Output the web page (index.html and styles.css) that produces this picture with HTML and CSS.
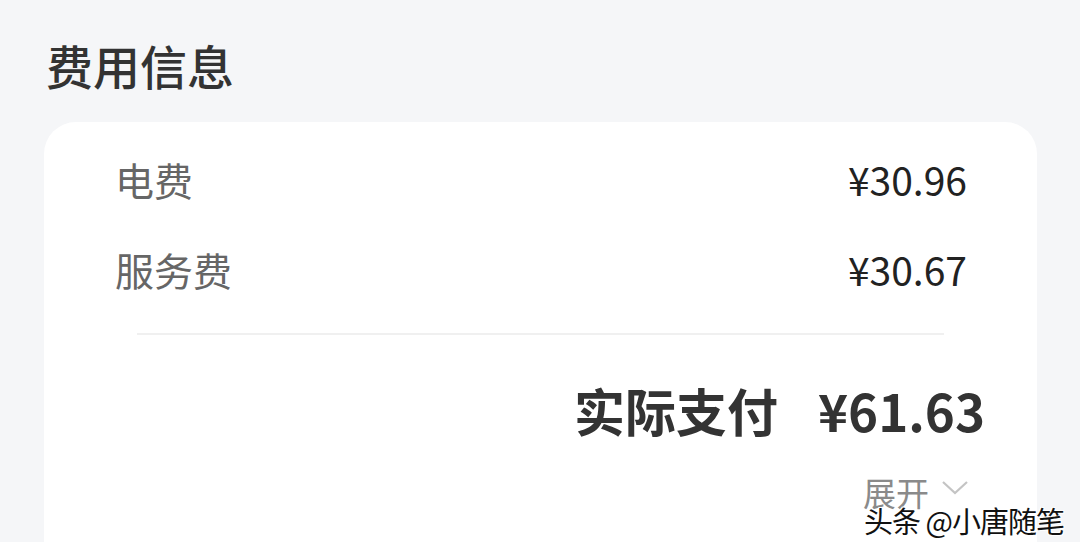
FILE: index.html
```html
<!DOCTYPE html>
<html lang="zh-CN">
  <head>
    <meta charset="UTF-8" />
    <meta name="viewport" content="width=device-width, initial-scale=1.0" />
    <title>费用信息</title>
    <link rel="stylesheet" href="styles.css">
  </head>

  <body>
    <h1 class="title">费用信息</h1>
    <div class="card">
      <div class="row">
        <span class="label">电费</span>
        <span class="amount">¥30.96</span>
      </div>
      <div class="row">
        <span class="label">服务费</span>
        <span class="amount">¥30.67</span>
      </div>
      <hr class="divider">
      <div class="total">
        <span>实际支付</span>
        <span class="total-amount">¥61.63</span>
      </div>
      <div class="expand">
        <span>展开</span>
        <svg width="28" height="16" viewBox="0 0 28 16">
          <path d="M2 2 L14 13 L26 2" fill="none" stroke="#c4c4c4" stroke-width="2.2" />
        </svg>
      </div>
    </div>
    <div class="watermark">头条 @小唐随笔</div>
  </body>
</html>
```

FILE: styles.css
```css
body {
  font-family: "Noto Sans CJK SC", "Noto Sans", sans-serif;
  margin: 0;
  padding: 41px 0 0 0;
  height: 542px;
  box-sizing: border-box;
  overflow: hidden;
  background-color: #f5f6f8;
  position: relative;
}

.title {
  margin: 0 0 0 46px;
  font-size: 47px;
  line-height: 48px;
  font-weight: 500;
  color: #333;
}

.card {
  margin: 33px 0 0 44px;
  width: 993px;
  height: 420px;
  box-sizing: border-box;
  padding: 37px 52px 0 71px;
  background-color: #fff;
  border-radius: 32px 32px 0 0;
}

.row {
  display: flex;
  justify-content: space-between;
  align-items: center;
  height: 40px;
  font-size: 39px;
  line-height: 40px;
  padding-right: 18px;
}

.row + .row {
  margin-top: 50px;
}

.label {
  color: #666;
}

.amount {
  color: #222;
}

.divider {
  margin: 44px 0 0 22px;
  width: 807px;
  border: none;
  border-top: 2px solid #f0f0f0;
}

.total {
  margin-top: 47px;
  display: flex;
  justify-content: flex-end;
  align-items: center;
  gap: 40px;
  height: 56px;
  font-size: 51px;
  line-height: 56px;
  font-weight: 600;
  color: #333;
}

.expand {
  margin-top: 34px;
  display: flex;
  justify-content: flex-end;
  align-items: center;
  gap: 12px;
  height: 40px;
  font-size: 33px;
  line-height: 40px;
  color: #8a8a8a;
  padding-right: 16px;
}

.expand svg {
  margin-top: -8px;
}

.watermark {
  position: absolute;
  left: 864px;
  top: 502px;
  white-space: nowrap;
  font-size: 29px;
  line-height: 36px;
  letter-spacing: -1px;
  color: #111;
  text-shadow: 1px 1px 0 #fff, -1px -1px 0 #fff, 1px -1px 0 #fff, -1px 1px 0 #fff;
}
```
